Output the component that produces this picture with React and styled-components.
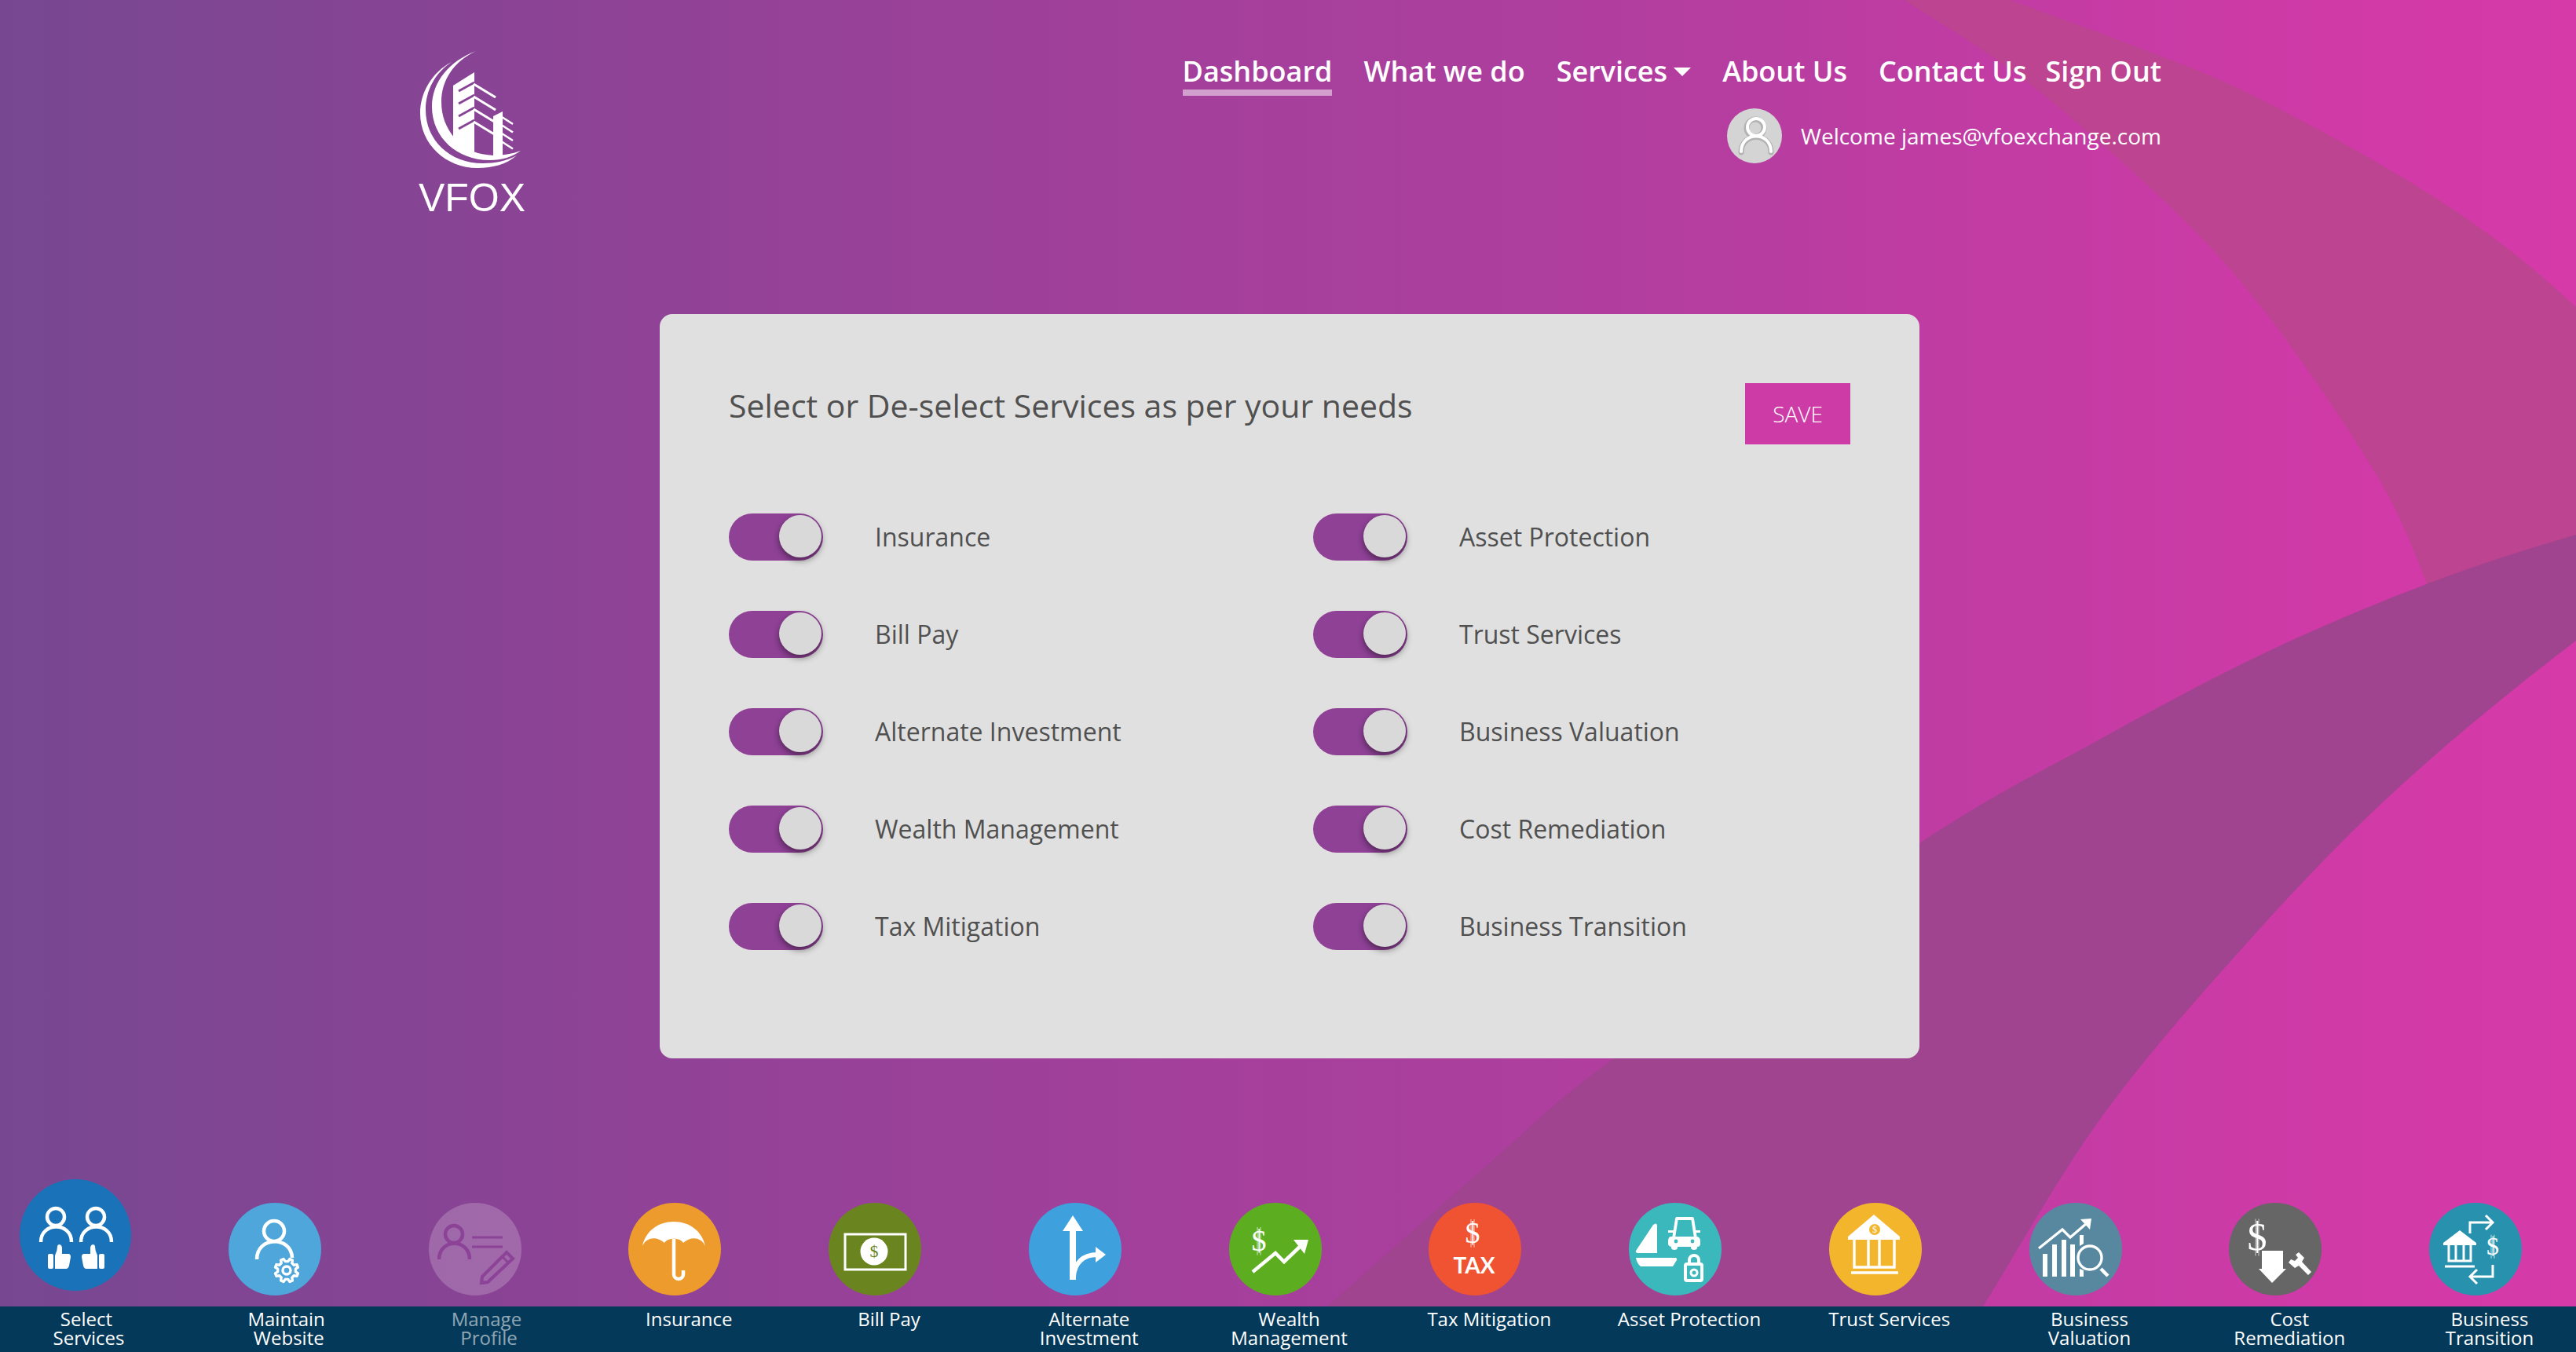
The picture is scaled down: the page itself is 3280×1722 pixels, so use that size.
import React, { useState } from "react";
import styled, { createGlobalStyle, css } from "styled-components";

const color = {
  purple: "#8f4196",
  magenta: "#cd3ba6",
  navy: "#043959",
  card: "#e0e0e0",
  text: "#505050",
};

const GlobalStyle = createGlobalStyle`
  *, *::before, *::after { box-sizing: border-box; }
  body {
    margin: 0;
    font-family: "Open Sans", "Noto Sans", sans-serif;
    font-weight: 500;
    color: #fff;
    background: #a1409b;
  }
  button, input { font: inherit; }
`;

const Page = styled.div`
  position: relative;
  isolation: isolate;
  display: flex;
  flex-direction: column;
  min-height: 100vh;
  overflow: hidden;
  background: linear-gradient(
    to right,
    #774891 0%,
    #8b4395 21%,
    #a1409b 43%,
    #ab3f9d 57%,
    #bf3ca3 75%,
    #cf3aa7 90%,
    #d63aa9 100%
  );
`;

const Backdrop = styled.svg`
  position: absolute;
  inset: 0;
  z-index: -1;
  width: 100%;
  height: 100%;
`;

const Header = styled.header`
  display: flex;
  justify-content: space-between;
  align-items: flex-start;
  width: 100%;
  max-width: 2284px;
  margin: 0 auto;
  padding: 60px 30px 0 32px;
`;

const LogoLink = styled.a`
  display: flex;
  flex-direction: column;
  align-items: center;
  color: #fff;
  text-decoration: none;
`;

const LogoName = styled.span`
  font-family: "Liberation Sans", Arial, sans-serif;
  font-size: 50px;
  font-weight: 400;
  line-height: 56px;
`;

const HeaderSide = styled.div`
  display: flex;
  flex-direction: column;
  align-items: flex-end;
  gap: 16px;
  padding-top: 8px;
`;

const NavRow = styled.nav`
  display: flex;
  gap: 24px;
`;

const NavLinks = styled.div`
  display: flex;
  gap: 40px;
`;

const navItem = css`
  display: flex;
  align-items: center;
  gap: 8px;
  padding: 0;
  border: 0;
  border-bottom: 8px solid transparent;
  background: none;
  color: #fff;
  font-size: 36px;
  font-weight: 600;
  line-height: 46px;
  text-decoration: none;
  white-space: nowrap;
`;

const NavLink = styled.a`
  ${navItem}
  ${(p) => p.$active && "border-bottom-color: rgba(255, 255, 255, 0.5);"}
`;

const NavMenuButton = styled.button`
  ${navItem}
  cursor: pointer;
`;

const Caret = styled.span`
  border: 11px solid transparent;
  border-top-color: #fff;
  border-bottom: 0;
`;

const User = styled.div`
  display: flex;
  align-items: center;
  gap: 24px;
  font-size: 28px;
  line-height: 40px;
`;

const Main = styled.main`
  display: flex;
  justify-content: center;
  padding: 120px 30px 120px 34px;
`;

const Card = styled.form`
  width: 100%;
  max-width: 1604px;
  padding: 88px 88px 138px;
  border-radius: 16px;
  background: ${color.card};
  color: ${color.text};
`;

const CardHeader = styled.div`
  display: flex;
  justify-content: space-between;
  align-items: flex-start;
  margin-bottom: 88px;
`;

const Title = styled.h1`
  margin: 0;
  font-size: 41px;
  font-weight: 500;
  line-height: 56px;
`;

const SaveButton = styled.button`
  padding: 20px 35px;
  border: 0;
  background: ${color.magenta};
  color: #fff;
  font-size: 28px;
  font-weight: 300;
  line-height: 38px;
  cursor: pointer;
`;

const ServiceGrid = styled.div`
  display: grid;
  grid-template-columns: 1fr 1fr;
  grid-template-rows: repeat(5, 60px);
  grid-auto-flow: column;
  gap: 64px 60px;
`;

const ServiceRow = styled.div`
  display: flex;
  align-items: center;
  gap: 66px;
`;

const ServiceLabel = styled.label`
  font-size: 32px;
  line-height: 44px;
  cursor: pointer;
`;

const Toggle = styled.input.attrs({ type: "checkbox", role: "switch" })`
  appearance: none;
  display: flex;
  flex: none;
  width: 120px;
  height: 60px;
  margin: 0;
  padding: 2px;
  border-radius: 30px;
  background: #aaa;
  cursor: pointer;

  &::before {
    content: "";
    width: 54px;
    height: 54px;
    border-radius: 50%;
    background: #d9d9d9;
    box-shadow: 0 4px 8px rgba(0, 0, 0, 0.45);
  }

  &:checked {
    justify-content: flex-end;
    background: ${color.purple};
  }
`;

const Dock = styled.nav`
  display: flex;
  justify-content: space-between;
  margin-top: auto;
  padding: 0 22px 0 25px;
  background: linear-gradient(to top, ${color.navy} 58px, transparent 58px);
`;

const DockItem = styled.a`
  flex: 0 1 176px;
  min-width: 0;
  color: #fff;
  text-decoration: none;
`;

const DockIcon = styled.span`
  display: flex;
  align-items: flex-end;
  height: 162px;
  padding: ${(p) => (p.$large ? "0 0 20px" : "0 0 14px 11px")};
`;

const DockLabel = styled.span`
  display: flex;
  justify-content: center;
  height: 58px;
  padding-top: 4px;
  font-size: 24px;
  line-height: 24px;
  text-align: center;
  white-space: pre;
  opacity: ${(p) => (p.$muted ? 0.55 : 1)};
`;

/* Catmull-Rom spline through the given points, as cubic segments. */
function spline(points) {
  return points
    .slice(0, -1)
    .map((p1, i) => {
      const p0 = points[i - 1] || p1;
      const p2 = points[i + 1];
      const p3 = points[i + 2] || p2;
      const a = [p1[0] + (p2[0] - p0[0]) / 6, p1[1] + (p2[1] - p0[1]) / 6];
      const b = [p2[0] - (p3[0] - p1[0]) / 6, p2[1] - (p3[1] - p1[1]) / 6];
      return `C${a.join(" ")} ${b.join(" ")} ${p2.join(" ")}`;
    })
    .join(" ");
}

const ribbonTopOuter = [[2560, 0], [2737, 66], [2862, 118], [3044, 217], [3175, 303], [3280, 391], [3400, 510]];
const ribbonTopInner = [[3092, 747], [3019, 593], [2837, 340], [2606, 124], [2425, 0]];
const ribbonLowUpper = [[3480, 628], [3280, 681], [3092, 743], [2885, 831], [2675, 941], [2444, 1074], [2056, 1347], [1898, 1480], [1690, 1664], [1620, 1722]];
const ribbonLowLower = [[2485, 1722], [2525, 1664], [2675, 1424], [2862, 1200], [3050, 1007], [3280, 816], [3480, 680]];

function Ribbons() {
  return (
    <Backdrop viewBox="0 0 3280 1722" preserveAspectRatio="none" aria-hidden="true">
      <path
        fill="#bd4490"
        d={`M2560 0 ${spline(ribbonTopOuter)} L3480 747 L3092 747 ${spline(ribbonTopInner)} Z`}
      />
      <path
        fill="#a0448f"
        d={`M3480 628 ${spline(ribbonLowUpper)} L2485 1722 ${spline(ribbonLowLower)} Z`}
      />
    </Backdrop>
  );
}

function LogoMark() {
  const floors = [0, 16, 32, 48];
  return (
    <svg width="142" height="164" viewBox="0 0 142 164" aria-hidden="true">
      <g fill="#fff">
        <path d="M45 19C20 32 5 58 5 84C5 124 38 154 78 154C98 154 115 149 128 138C115 145 100 148 85 148C42 148 12 118 12 80C12 55 24 33 45 19Z" />
        <path d="M76 5C42 18 20 44 20 76C20 115 52 144 93 144C110 144 122 140 133 132C122 136 110 138 98 138C88 137 80 136 73 133L48 115C38 102 32 88 32 70C32 42 48 18 76 5Z" />
        <path d="M47 49L74 32V134L47 116Z" />
        <path d="M98 88L110 82V138H98Z" />
      </g>
      {floors.map((y) => (
        <g key={y} fill="none">
          <path d={`M54 ${56 + y}L74 ${45 + y}`} stroke="#884394" strokeWidth="3" />
          <path d={`M73 ${47 + y}L101 ${64 + y}`} stroke="#fff" strokeWidth="3.2" />
        </g>
      ))}
      {[0, 10.5, 21, 31.5].map((y) => (
        <path key={y} d={`M109 ${89 + y}L123 ${98 + y}`} stroke="#fff" strokeWidth="2.6" />
      ))}
    </svg>
  );
}

function Avatar() {
  return (
    <svg width="70" height="70" viewBox="0 0 70 70" aria-hidden="true">
      <circle cx="35" cy="35" r="35" fill="#d4d4d4" />
      <g fill="none" strokeLinecap="round">
        <g stroke="#b2b2b2" strokeWidth="7">
          <circle cx="36" cy="25" r="11" />
          <path d="M18 56C18 30 56 30 56 56" />
        </g>
        <g stroke="#fff" strokeWidth="4">
          <circle cx="37" cy="24" r="11" />
          <path d="M18 55C18 29 56 29 56 55" />
        </g>
      </g>
    </svg>
  );
}

function Dollar({ x, y, size, fill = "#fff", bars = true }) {
  return (
    <g>
      <text x={x} y={y} fontSize={size} fill={fill} fontWeight="400" textAnchor="middle" fontFamily="Liberation Serif, serif">
        $
      </text>
      {bars && (
        <path
          d={`M${x - 2} ${y - size * 0.79}V${y + size * 0.15}M${x + 2} ${y - size * 0.79}V${y + size * 0.15}`}
          stroke={fill}
          strokeWidth="1"
          opacity="0.7"
        />
      )}
    </g>
  );
}

function gearPath(cx, cy, teeth, outer, inner) {
  const points = [];
  for (let i = 0; i < teeth; i += 1) {
    [[-0.3, inner], [-0.16, outer], [0.16, outer], [0.3, inner]].forEach(([offset, r]) => {
      const angle = ((i + offset) / teeth) * Math.PI * 2 - Math.PI / 8;
      points.push(`${(cx + r * Math.cos(angle)).toFixed(2)} ${(cy + r * Math.sin(angle)).toFixed(2)}`);
    });
  }
  return `M${points.join("L")}Z`;
}

const thumb =
  "M45 97Q48 91 48 86Q48 83 51 83Q54 84 54 88V95H62Q65 95 65 99L63 110Q62 114 59 114H45Z";

const drawings = {
  select: (
    <g>
      <g fill="none" stroke="#fff" strokeWidth="4.5">
        <circle cx="46" cy="48" r="11" />
        <path d="M27 80C27 54 66 54 66 80" />
        <circle cx="97" cy="48" r="11" />
        <path d="M78 80C78 54 117 54 117 80" />
      </g>
      <g fill="#fff">
        <rect x="36" y="95" width="7" height="19" rx="2" />
        <path d={thumb} />
        <g transform="translate(144 0) scale(-1 1)">
          <rect x="36" y="95" width="7" height="19" rx="2" />
          <path d={thumb} />
        </g>
      </g>
    </g>
  ),
  maintain: (
    <g fill="none" stroke="#fff" strokeWidth="4.5">
      <circle cx="58" cy="36" r="13" />
      <path d="M36 72C36 42 80 42 81 70" />
      <path d={gearPath(74, 86, 8, 15, 11.5)} fill="#4ea6da" strokeWidth="3.4" strokeLinejoin="round" />
      <circle cx="74" cy="86" r="5" strokeWidth="3.4" />
    </g>
  ),
  profile: (
    <g fill="none" stroke="#8b4297" strokeWidth="4.5">
      <circle cx="32" cy="40" r="11" />
      <path d="M13 72C13 45 52 45 52 72" />
      <path d="M55 44H94M55 56H94" strokeWidth="3" />
      <path d="M67 102L68 94L99 63L107 71L75 101Z" strokeWidth="4" />
      <path d="M93 68L102 77" strokeWidth="3" />
      <path d="M66 104V97L73 103Z" fill="#8b4297" stroke="none" />
    </g>
  ),
  insurance: (
    <g>
      <path
        fill="#fff"
        d="M18 55C22 36 38 24 58 24C78 24 94 36 98 55C93 44 80 42 70 51C66 44 50 44 46 51C36 42 23 44 18 55Z"
      />
      <path d="M58 46V91A6 6 0 0 0 70 91V86" fill="none" stroke="#fff" strokeWidth="4.5" />
    </g>
  ),
  bill: (
    <g>
      <rect x="21" y="40" width="77" height="45" fill="none" stroke="#fff" strokeWidth="3" />
      <circle cx="58" cy="62" r="17.5" fill="#fff" />
      <Dollar x={58} y={69} size={22} fill="#6a8520" bars={false} />
    </g>
  ),
  alternate: (
    <g>
      <path fill="#fff" d="M56 16L69 36H60V98H52V36H43Z" />
      <path d="M57 94C58 76 70 66 87 66" fill="none" stroke="#fff" strokeWidth="6" />
      <path fill="#fff" d="M85 56L98 66L85 76Z" />
    </g>
  ),
  wealth: (
    <g>
      <Dollar x={38} y={61} size={38} />
      <path d="M30 88L59 64L70 75L92 54" fill="none" stroke="#fff" strokeWidth="4.5" />
      <path fill="#fff" d="M82 47L101 47L96 65Z" />
    </g>
  ),
  tax: (
    <g>
      <Dollar x={56} y={51} size={38} />
      <text x="58" y="90" fontSize="28" fontWeight="700" fill="#fff" textAnchor="middle" fontFamily="Lato, sans-serif">
        TAX
      </text>
    </g>
  ),
  asset: (
    <g>
      <path fill="#fff" d="M9 61L31 28Q36 24 36 30V64H11Q8 63 9 61ZM9 70H60Q62 71 61 73L56 81H15Q10 77 9 70Z" />
      <path d="M61 20H81L85 45H57Z" fill="none" stroke="#fff" strokeWidth="3.8" strokeLinejoin="round" />
      <path fill="#fff" d="M53 43H87Q91 44 91 49V52Q91 56 87 56V58Q86 60 83 60Q80 60 79 58V56H62V58Q61 60 58 60Q55 60 54 58V56Q50 55 50 52V49Q50 44 53 43ZM50 35H57V38H50ZM84 35H91V38H84Z" />
      <circle cx="60" cy="49" r="2.4" fill="#3bb8bb" />
      <circle cx="81" cy="49" r="2.4" fill="#3bb8bb" />
      <g fill="none" stroke="#fff">
        <rect x="72" y="78" width="21" height="21" rx="2" strokeWidth="4" />
        <path d="M77 77V73A6 6 0 0 1 89 73V77" strokeWidth="4" />
        <circle cx="83" cy="89" r="4" strokeWidth="3" />
      </g>
    </g>
  ),
  trust: (
    <g>
      <path fill="#fff" d="M57 15L90 43V47H24V43Z" />
      <circle cx="58" cy="34" r="7" fill="#f3b52c" />
      <Dollar x={58} y={38} size={12} fill="#fff" bars={false} />
      <path d="M32 47V82H83V47M50 47V82M64 47V82" fill="none" stroke="#fff" strokeWidth="3.4" />
      <path d="M28 89H88" stroke="#fff" strokeWidth="3.4" />
    </g>
  ),
  valuation: (
    <g>
      <path fill="#fff" d="M17 65H23V94H17ZM29 53H35V94H29ZM41 47H47V94H41ZM52 53H58V94H52ZM64 41H69V52L64 55ZM64 84L69 86V94H64Z" />
      <g fill="none" stroke="#fff">
        <circle cx="77" cy="70" r="15" strokeWidth="3.4" />
        <path d="M91 84L100 93" strokeWidth="4.5" />
        <path d="M12 58L42 34L52 44L73 26" strokeWidth="3.2" />
      </g>
      <path fill="#fff" d="M65 21L79 20L77 34Z" />
    </g>
  ),
  cost: (
    <g>
      <Dollar x={36} y={60} size={50} />
      <path fill="#fff" d="M42 61H69V84H73L55 102L38 84H42Z" />
      <path fill="#fff" d="M85 66L89 63L96 70L93 75L105 88L101 92L89 80L84 83L76 76L79 72L84 74L88 70Z" />
    </g>
  ),
  transition: (
    <g>
      <path fill="#fff" d="M39 35L60 51V54H18V51Z" />
      <path d="M25 54V74H53V54M34 54V74M44 54V74" fill="none" stroke="#fff" strokeWidth="3" />
      <path d="M20 81H58" stroke="#fff" strokeWidth="3" />
      <g fill="none" stroke="#fff" strokeWidth="3">
        <path d="M52 39V25H80M72 16L81 25L72 34" />
        <path d="M81 79V94H53M61 85L52 94L61 103" />
      </g>
      <Dollar x={81} y={66} size={32} />
    </g>
  ),
};

const dockItems = [
  { icon: "select", fill: "#1a72b8", label: "Select \nServices", large: true },
  { icon: "maintain", fill: "#4ea6da", label: "Maintain \nWebsite" },
  { icon: "profile", fill: "rgba(255, 255, 255, 0.2)", label: "Manage \nProfile", muted: true },
  { icon: "insurance", fill: "#ed9b2d", label: "Insurance" },
  { icon: "bill", fill: "#6a8520", label: "Bill Pay" },
  { icon: "alternate", fill: "#3ea0dd", label: "Alternate\nInvestment" },
  { icon: "wealth", fill: "#5cae20", label: "Wealth\nManagement" },
  { icon: "tax", fill: "#ef5331", label: "Tax Mitigation" },
  { icon: "asset", fill: "#3bb8bb", label: "Asset Protection" },
  { icon: "trust", fill: "#f3b52c", label: "Trust Services" },
  { icon: "valuation", fill: "#58889f", label: "Business\nValuation" },
  { icon: "cost", fill: "#666666", label: "Cost\nRemediation" },
  { icon: "transition", fill: "#2791ae", label: "Business\nTransition" },
];

function DockBadge({ icon, fill, large }) {
  const size = large ? 142 : 118;
  return (
    <svg width={size} height={size} viewBox={`0 0 ${size} ${size}`} aria-hidden="true">
      <circle cx={size / 2} cy={size / 2} r={size / 2} fill={fill} />
      {drawings[icon]}
    </svg>
  );
}

const services = [
  "Insurance",
  "Bill Pay",
  "Alternate Investment",
  "Wealth Management",
  "Tax Mitigation",
  "Asset Protection",
  "Trust Services",
  "Business Valuation",
  "Cost Remediation",
  "Business Transition",
];

export default function App() {
  const [enabled, setEnabled] = useState(() => services.map(() => true));
  const flip = (index) => setEnabled((list) => list.map((on, i) => (i === index ? !on : on)));

  return (
    <>
      <GlobalStyle />
      <Page>
        <Ribbons />
        <Header>
          <LogoLink href="#home">
            <LogoMark />
            <LogoName>VFOX</LogoName>
          </LogoLink>
          <HeaderSide>
            <NavRow>
              <NavLinks>
                <NavLink href="#dashboard" $active>Dashboard</NavLink>
                <NavLink href="#what-we-do">What we do</NavLink>
                <NavMenuButton type="button">
                  Services
                  <Caret />
                </NavMenuButton>
                <NavLink href="#about">About Us</NavLink>
                <NavLink href="#contact">Contact Us</NavLink>
              </NavLinks>
              <NavLink href="#sign-out">Sign Out</NavLink>
            </NavRow>
            <User>
              <Avatar />
              <span>Welcome james@vfoexchange.com</span>
            </User>
          </HeaderSide>
        </Header>

        <Main>
          <Card onSubmit={(event) => event.preventDefault()}>
            <CardHeader>
              <Title>Select or De-select Services as per your needs</Title>
              <SaveButton type="submit">SAVE</SaveButton>
            </CardHeader>
            <ServiceGrid>
              {services.map((name, index) => (
                <ServiceRow key={name}>
                  <Toggle id={`service-${index}`} checked={enabled[index]} onChange={() => flip(index)} />
                  <ServiceLabel htmlFor={`service-${index}`}>{name}</ServiceLabel>
                </ServiceRow>
              ))}
            </ServiceGrid>
          </Card>
        </Main>

        <Dock>
          {dockItems.map((item) => (
            <DockItem key={item.icon} href={`#${item.icon}`}>
              <DockIcon $large={item.large}>
                <DockBadge icon={item.icon} fill={item.fill} large={item.large} />
              </DockIcon>
              <DockLabel $muted={item.muted}>{item.label}</DockLabel>
            </DockItem>
          ))}
        </Dock>
      </Page>
    </>
  );
}
